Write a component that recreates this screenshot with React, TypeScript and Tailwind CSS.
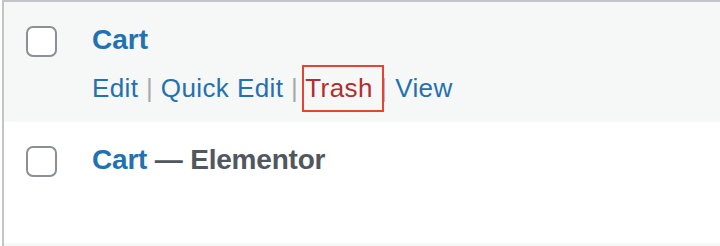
import React from 'react';

function Checkbox() {
  return (
    <span className="block w-[31px] h-[31px] rounded-[7px] border-2 border-[#8c8f94] bg-white shrink-0" />
  );
}

function Sep() {
  return <span className="text-[#a7aaad]"> | </span>;
}

export default function App() {
  return (
    <div
      className="w-[720px] h-[246px] bg-white overflow-hidden"
      style={{ fontFamily: '"Liberation Sans", Arial, sans-serif' }}
    >
      <div className="ml-[2px] border-l-2 border-t-2 border-[#c3c4c7]">
        {/* Row 1: hovered, showing row actions */}
        <div className="relative h-[120px] bg-[#f6f7f7] flex">
          <div className="w-[88px] pl-[22px] pt-[24px]">
            <Checkbox />
          </div>
          <div className="pt-[18px]">
            <div className="text-[28px] leading-[40px] font-bold text-[#2271b1]">Cart</div>
            <div className="mt-[10px] text-[26px] leading-[36px] tracking-[0.4px] whitespace-pre">
              <span className="text-[#2271b1]">Edit</span>
              <Sep />
              <span className="text-[#2271b1]">Quick Edit</span>
              <Sep />
              <span className="text-[#b32d2e]">Trash</span>
              <Sep />
              <span className="text-[#2271b1]">View</span>
            </div>
          </div>
          {/* annotation box around Trash */}
          <div className="absolute left-[298px] top-[63px] w-[82px] h-[47px] border-2 border-[#e8432e]" />
        </div>

        {/* Row 2 */}
        <div className="h-[121px] bg-white flex">
          <div className="w-[88px] pl-[22px] pt-[24px]">
            <Checkbox />
          </div>
          <div className="pt-[18px]">
            <div className="text-[28px] leading-[40px] font-bold whitespace-pre tracking-[-0.2px]">
              <span className="text-[#2271b1]">Cart</span>
              <span className="text-[#50575e]"> — Elementor</span>
            </div>
          </div>
        </div>

        {/* Next row (striped) */}
        <div className="h-[10px] bg-[#f6f7f7]" />
      </div>
    </div>
  );
}
